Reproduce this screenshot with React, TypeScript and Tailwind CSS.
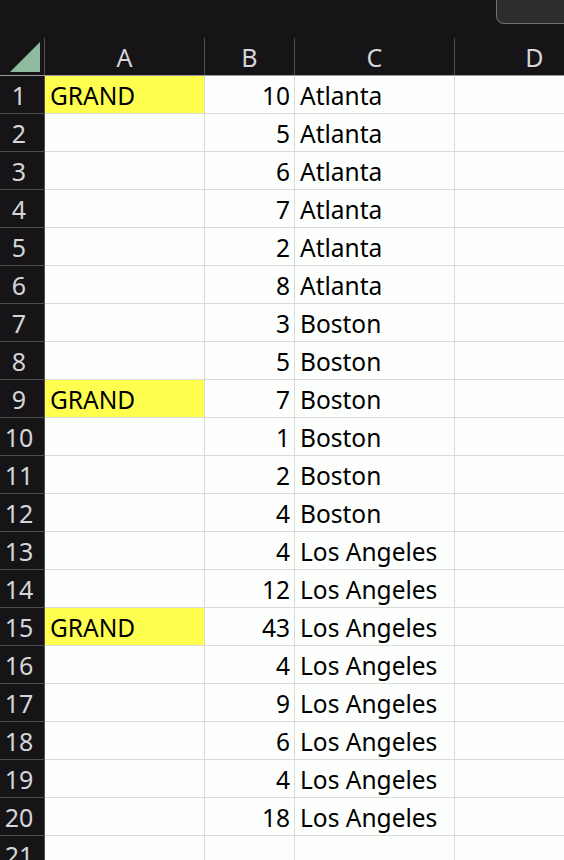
import React from 'react';

type Row = { grand?: boolean; qty?: number; city?: string };

const rows: Row[] = [
  { grand: true, qty: 10, city: 'Atlanta' },
  { qty: 5, city: 'Atlanta' },
  { qty: 6, city: 'Atlanta' },
  { qty: 7, city: 'Atlanta' },
  { qty: 2, city: 'Atlanta' },
  { qty: 8, city: 'Atlanta' },
  { qty: 3, city: 'Boston' },
  { qty: 5, city: 'Boston' },
  { grand: true, qty: 7, city: 'Boston' },
  { qty: 1, city: 'Boston' },
  { qty: 2, city: 'Boston' },
  { qty: 4, city: 'Boston' },
  { qty: 4, city: 'Los Angeles' },
  { qty: 12, city: 'Los Angeles' },
  { grand: true, qty: 43, city: 'Los Angeles' },
  { qty: 4, city: 'Los Angeles' },
  { qty: 9, city: 'Los Angeles' },
  { qty: 6, city: 'Los Angeles' },
  { qty: 4, city: 'Los Angeles' },
  { qty: 18, city: 'Los Angeles' },
  {},
];

const font = { fontFamily: '"Noto Sans", "Open Sans", sans-serif' };

export default function App() {
  return (
    <div className="w-[564px] h-[860px] overflow-hidden bg-[#161417]" style={font}>
      {/* top strip */}
      <div className="h-[38px] flex justify-end items-start">
        <div className="w-[68px] h-[24px] rounded-bl-[8px] border-l border-b border-[#707070] bg-[#2c2e2b]" />
      </div>

      {/* column headers */}
      <div className="flex h-[38px] border-b border-[#9a9a9a]">
        <div className="w-[45px] shrink-0 border-r border-[#4e4e4e] flex items-end justify-end pr-[3px] pb-[2px]">
          <svg width="31" height="31" viewBox="0 0 31 31">
            <polygon points="0,30 30,0 30,30" fill="#8fbc9e" />
          </svg>
        </div>
        {['A', 'B', 'C'].map((c, i) => (
          <div
            key={c}
            className={`${i === 1 ? 'w-[90px]' : 'w-[160px]'} shrink-0 border-r border-[#4e4e4e] flex items-center justify-center text-[25px] text-[#d4d6d9] pt-[2px]`}
          >
            {c}
          </div>
        ))}
        <div className="flex-1 flex items-center justify-center text-[25px] text-[#d4d6d9] pt-[2px] pl-[50px]">D</div>
      </div>

      {/* data rows */}
      {rows.map((r, i) => (
        <div key={i} className="flex h-[38px]">
          <div className="w-[45px] shrink-0 border-r border-b border-[#4e4e4e] bg-[#161417] flex items-center justify-center pr-[6px] pt-[2px] text-[25px] text-[#d4d6d9]">
            {i + 1}
          </div>
          <div
            className={`w-[160px] shrink-0 border-r border-b border-[#dadcda] flex items-center pl-[5px] pt-[4px] text-[24.5px] text-black ${
              r.grand ? 'bg-[#ffff50]' : 'bg-[#fdfffd]'
            }`}
          >
            {r.grand ? 'GRAND' : ''}
          </div>
          <div className="w-[90px] shrink-0 border-r border-b border-[#dadcda] bg-[#fdfffd] flex items-center justify-end pr-[4px] pt-[4px] text-[24.5px] text-black">
            {r.qty ?? ''}
          </div>
          <div className="w-[160px] shrink-0 border-r border-b border-[#dadcda] bg-[#fdfffd] flex items-center pl-[5px] pt-[4px] text-[24.5px] text-black whitespace-nowrap">
            {r.city ?? ''}
          </div>
          <div className="flex-1 border-b border-[#dadcda] bg-[#fdfffd]" />
        </div>
      ))}
    </div>
  );
}
